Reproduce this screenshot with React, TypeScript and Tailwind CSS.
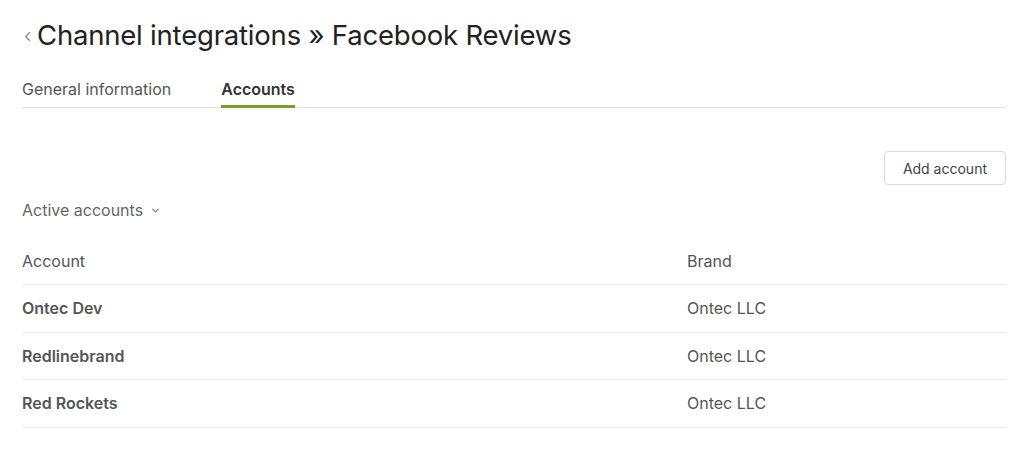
import { ChevronDown, ChevronLeft } from 'lucide-react';

const accounts = [
  { name: 'Ontec Dev', brand: 'Ontec LLC' },
  { name: 'Redlinebrand', brand: 'Ontec LLC' },
  { name: 'Red Rockets', brand: 'Ontec LLC' },
];

export default function App() {
  return (
    <div className="min-h-screen bg-white pl-[20px] pr-[20px] pt-[18px] font-['Inter',sans-serif] text-[#555]">
      {/* Title */}
      <h1 className="flex items-center text-[27.5px] leading-[34px] text-[#222]">
        <ChevronLeft className="w-[15px] h-[15px] text-[#8a8a8a] mr-[2px] mt-[3px]" strokeWidth={2} />
        <span className="tracking-[-0.2px]">Channel integrations » Facebook Reviews</span>
      </h1>

      {/* Tabs */}
      <div className="ml-[2px] mt-[25px] flex border-b border-[#e2e2e2] text-[16px] leading-[24px]">
        <div className="pb-[6px] text-[#555]">General information</div>
        <div className="ml-[50px] pb-[4px] font-semibold text-[#333] border-b-[3px] border-[#76a02a] -mb-px">
          Accounts
        </div>
      </div>

      <div className="ml-[2px]">
        {/* Actions */}
        <div className="mt-[43px] flex justify-end">
          <button className="h-[34px] px-[18px] rounded-[4px] border border-[#dadada] bg-white text-[14px] text-[#444]">
            Add account
          </button>
        </div>

        <div className="mt-[13px] flex items-center gap-[7px] text-[16px] leading-[24px] text-[#666]">
          Active accounts
          <ChevronDown className="w-[11px] h-[11px] text-[#777]" strokeWidth={2.5} />
        </div>

        {/* Table */}
        <div className="mt-[16px] text-[16px] leading-[24px]">
          <div className="flex h-[47px] items-center border-b border-[#e8e8e8] text-[#555]">
            <div className="w-[665px]">Account</div>
            <div>Brand</div>
          </div>
          {accounts.map((a) => (
            <div key={a.name} className="flex h-[47.5px] items-center border-b border-[#e8e8e8]">
              <div className="w-[665px] font-semibold text-[#555]">{a.name}</div>
              <div className="text-[#555]">{a.brand}</div>
            </div>
          ))}
        </div>
      </div>
    </div>
  );
}
